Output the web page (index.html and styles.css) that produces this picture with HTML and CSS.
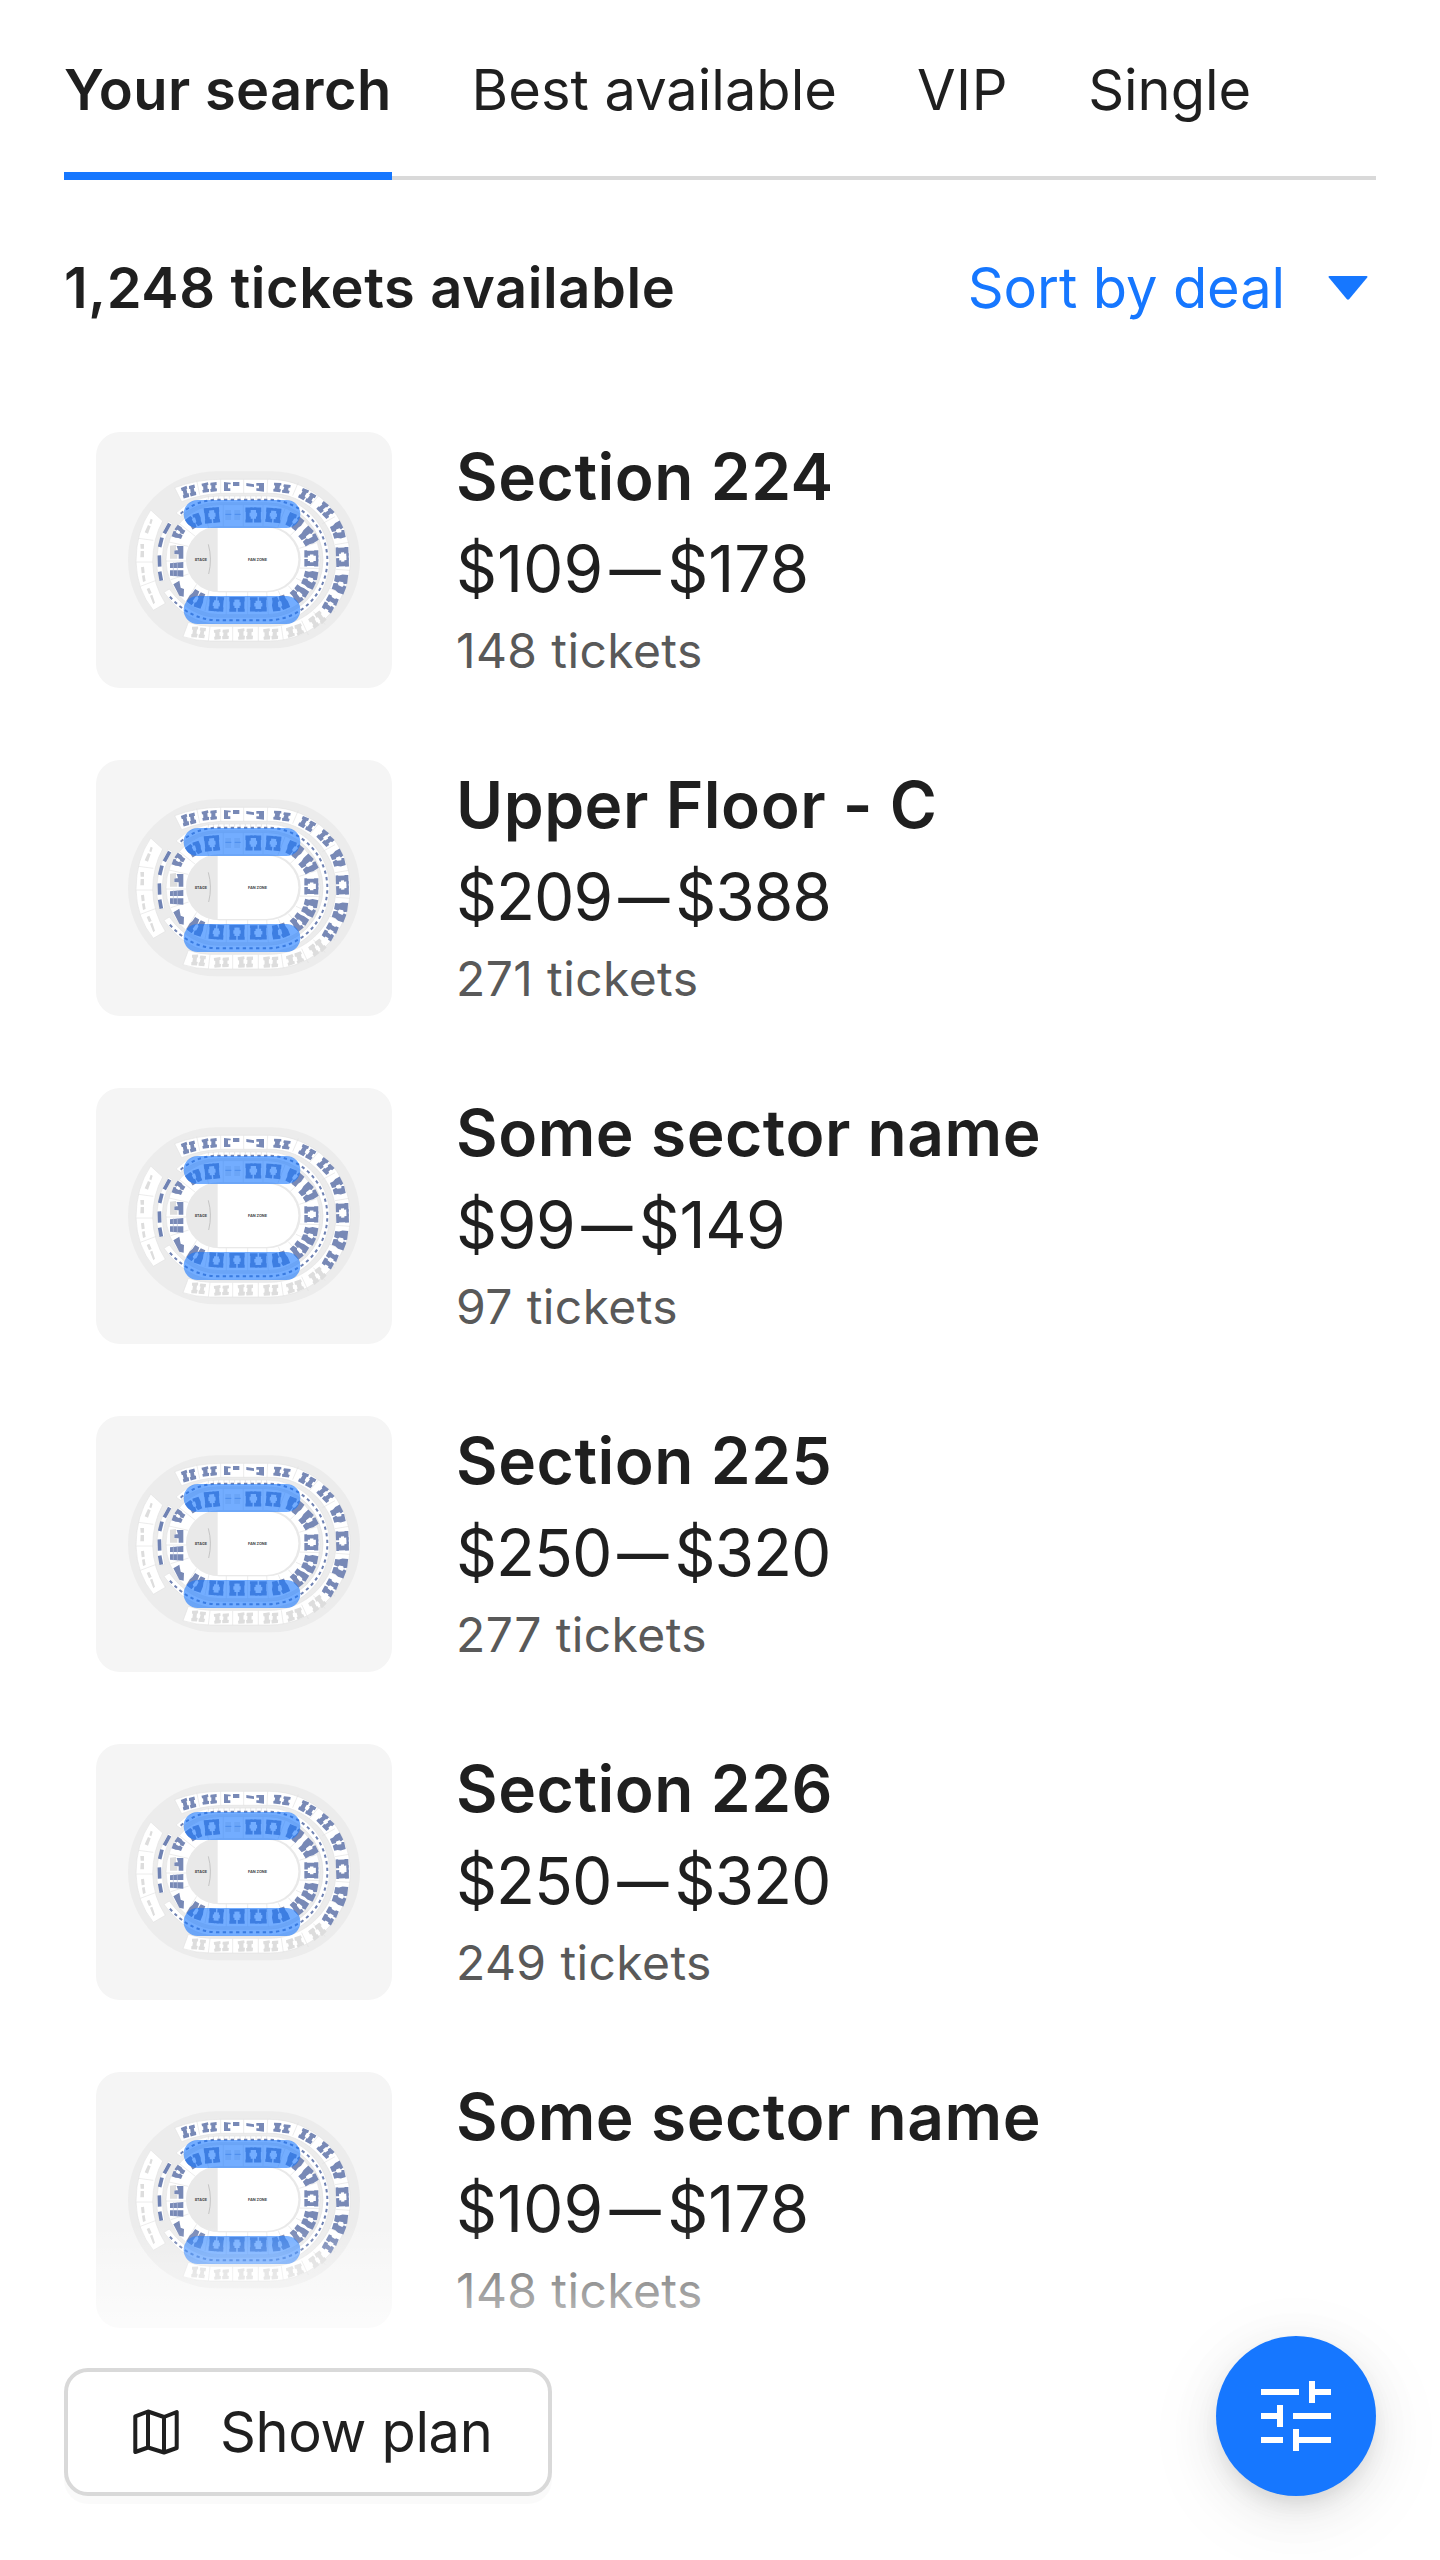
FILE: index.html
```html
<!DOCTYPE html>
<html lang="en">
<head>
<meta charset="utf-8">
<title>Tickets</title>
<link rel="stylesheet" href="styles.css">
</head>
<body>
<svg class="defs" width="0" height="0" aria-hidden="true">
  <defs>
    <g id="seats">
      <path d="M-21-20H-2V-14H-7V-6H-10V4H-7V10H-2V20H-21V12H-20V-8H-21Z"/>
      <path d="M21-20H2V-14H7V-6H10V4H7V10H2V20H21V12H20V-8H21Z"/>
      <path d="M-8-20H8V-13H-8Z"/>
    </g>
    <g id="pair">
      <path d="M-21-13L-3-16-2-8-5-7-5 4-1 5-2 15-19 16-20 8-17 6-17-4-20-5Z"/>
      <path d="M21-15L4-14 3-6 6-5 5 5 2 6 3 15 20 14 21 5 17 4 17-5 21-6Z"/>
    </g>
    <g id="wedge">
      <path d="M-23-17L-3-20 0-11-4-8-4 3 0 6-2 18-16 19-17 8-21-1Z"/>
      <path d="M23-17L4-20 2-12 7-9 5 3 1 6 3 18 17 19 18 8 22-1Z"/>
    </g>
    <symbol id="venue" viewBox="18 21 888 768">
      <rect x="114" y="139" width="696" height="531" rx="265" fill="#ececec"/>
      <g fill="#fff" stroke="#e3e3e3" stroke-width="2">
        <path d="M254 188Q320 163 392 163H539A242 242.500 0 0 1 539 648H360Q318 648 279 635L295 592Q330 604 360 604H539A199 199.500 0 0 0 539 205H392Q330 208 275 230Z"/>
        <path d="M182 255L218 288Q189 340 188 410 190 480 226 535L190 556Q140 495 138 410 138 320 182 255Z"/>
        <path d="M258 264Q310 213 385 213H532A187 192 0 0 1 532 597H385Q290 597 222 502L238 492Q300 577 385 577H532A167 172 0 0 0 532 233H385Q318 233 272 274Z"/>
        <path d="M235 288L247 296Q219 340 217 400 217 436 224 466L208 471Q198 430 201 392 207 330 235 288Z"/>
        <path d="M390 239H530A160 165 0 0 1 530 569H390A162 165 0 0 1 390 239ZM390 306A98 97 0 0 0 390 500H530A98 97 0 0 0 530 306Z" fill-rule="evenodd"/>
        <path d="M145 340L190 346M138 411H188M151 484L199 466M320 166L329 209M392 163V205M461 163V205M533 163L531 205M625 172L608 212M685 213L658 245M735 275L697 296M777 352L735 359M780 436L738 433M762 508L720 490M735 561L700 536M705 598L670 560M655 630L635 587M580 645L574 604M505 648V605M428 648V605M355 648L360 605" fill="none"/>
        <path d="M400 239V306M460 239V306M519 239V306M585 252L563 308M642 292L600 332M680 353L628 370M691 431L628 429M678 487L618 460M640 535L595 482M590 560L565 497M535 569L530 500M473 569V500M409 569V500M345 558L357 495M289 528L320 478M242 464L296 447M228 408H292M237 351L294 364M268 296L316 334M340 250L356 309" fill="none"/>
      </g>
      <path d="M355 213V224M370 213V224M386 213V224M402 213V224M418 213V224M434 213V224M450 213V224M466 213V224M482 213V224M498 213V224M514 213V224M530 213V224" stroke="#ddd" stroke-width="2"/>
      <rect x="288" y="304" width="344" height="198" rx="98" fill="#e9e9e9"/>
      <path d="M383 308H530A95 95 0 0 1 530 498H383Z" fill="#fff"/>
      <path d="M355 358Q367 402 356 447" fill="none" stroke="#c5c5c5" stroke-width="3"/>
      <text x="314" y="407" class="venue-label" textLength="37" lengthAdjust="spacingAndGlyphs">STAGE</text>
      <text x="474" y="408" class="venue-label" textLength="57" lengthAdjust="spacingAndGlyphs">FAN ZONE</text>
      <path d="M272 266Q322 224 385 224H532A180 181 0 0 1 532 586H385Q300 586 235 510" fill="none" stroke="#6f82b3" stroke-width="6" stroke-dasharray="10 10"/>
      <path d="M239 296L223 325M216 338L209 366M208 391L209 425M209 440L214 467" fill="none" stroke="#6f82b3" stroke-width="11"/>
      <g fill="#7889b6">
        <use href="#pair" transform="translate(296 199) rotate(-12) scale(1 1.120)"/>
        <use href="#pair" transform="translate(358 187) rotate(-4) scale(1.080 .95)"/>
        <path d="M402 171L422 173V178H414V190H421V198H402ZM429 171H448V183H429ZM469 174L492 178V186L469 183ZM499 174H522V200L499 197V190H507V182H499Z"/>
        <use href="#pair" transform="translate(575 189) rotate(10) scale(1.200 .9)"/>
        <use href="#pair" transform="translate(651 213) rotate(32) scale(1.100)"/>
        <use href="#pair" transform="translate(706 255) rotate(48) scale(1.100)"/>
        <use href="#wedge" transform="translate(743 317) rotate(70) scale(1.150 .95)"/>
        <use href="#seats" transform="translate(757 396) rotate(88) scale(1.400 .95)"/>
        <use href="#wedge" transform="translate(750 475) rotate(104) scale(1.300 1.050)"/>
        <use href="#pair" transform="translate(721 536) rotate(122) scale(1.150)"/>
        <use href="#wedge" transform="translate(313 289) rotate(-28)"/>
        <use href="#seats" transform="translate(366 271) rotate(-5) scale(1.080 1.150)"/>
        <use href="#seats" transform="translate(490 270) scale(1.130)"/>
        <use href="#seats" transform="translate(550 271) rotate(5) scale(1.080)"/>
        <use href="#wedge" transform="translate(612 290) rotate(32) scale(1.100)"/>
        <use href="#wedge" transform="translate(654 335) rotate(54) scale(1.150 1.200)"/>
        <use href="#seats" transform="translate(664 400) rotate(90) scale(1.150 1.050)"/>
        <use href="#wedge" transform="translate(659 462) rotate(108) scale(1.200 1.080)"/>
        <use href="#wedge" transform="translate(627 505) rotate(132) scale(1.050 1.150)"/>
        <use href="#wedge" transform="translate(570 534) rotate(165) scale(1.150)"/>
        <use href="#seats" transform="translate(505 538) rotate(180) scale(1.200 1.080)"/>
        <use href="#seats" transform="translate(441 538) scale(1.100)"/>
        <use href="#seats" transform="translate(379 537) rotate(184) scale(1.050 1.080)"/>
        <use href="#wedge" transform="translate(320 521) rotate(208) scale(1.050 1.250)"/>
        <use href="#wedge" transform="translate(266 323) rotate(-62) scale(.85 .8)"/>
        <path d="M260 363H280V401H266V388H253V376H264ZM240 415L280 411V429H240ZM240 436H280V455L240 452ZM250 478L268 467 272 488 282 492 281 515 268 512Z"/>
        <path d="M262 411V455M250 412V454" stroke="#b3bedb" stroke-width="2"/>
      </g>
      <g fill="#ddd">
        <path d="M240 362L258 360V376H252V388H262V401H240ZM151 357H162V371H152ZM152 378H162V397H151ZM153 427L162 425 164 443 155 445ZM156 452L164 450 167 468 159 471ZM170 492L178 488 185 504 177 508ZM180 512L187 509 195 533 190 538ZM182 281L188 284 184 298 178 295ZM174 300L182 304 174 326 164 322Z"/>
        <path d="M406 255H423V285H406ZM433 255H450V285H433Z" opacity=".6"/>
        <use href="#pair" transform="translate(682 584) rotate(145) scale(1.100 1.200)"/>
        <use href="#pair" transform="translate(615 617) rotate(164) scale(1.200 1.050)"/>
        <use href="#pair" transform="translate(542 627) scale(1.080)"/>
        <use href="#pair" transform="translate(466 627) scale(1.100)"/>
        <use href="#pair" transform="translate(394 628) scale(1.080 1)"/>
        <use href="#pair" transform="translate(325 622) rotate(8) scale(1 1.080)"/>
      </g>
      <path d="M406 268H424M434 268H452" stroke="#9aabd0" stroke-width="3"/>
      <path d="M323 225H589A42 42 0 0 1 589 309H323A42 42 0 0 1 323 225ZM323 513H589A42 42 0 0 1 589 597H323A42 42 0 0 1 323 513Z" fill="#1677ff" fill-opacity=".6"/>
    </symbol>
  </defs>
</svg>

<main class="screen">
  <nav class="tabs">
    <a class="tab tab-active">Your search</a>
    <a class="tab">Best available</a>
    <a class="tab tab-short">VIP</a>
    <a class="tab">Single</a>
  </nav>

  <header class="summary">
    <h1 class="count">1,248 tickets available</h1>
    <button class="sort">Sort by deal
      <svg class="caret" viewBox="0 0 40 24"><path d="M1.500 0H38.500Q40 0 39.200 1.500L21.300 23Q20 24.500 18.700 23L.8 1.500Q0 0 1.500 0Z" fill="currentColor"/></svg>
    </button>
  </header>

  <ul class="list">
    <li class="item">
      <svg class="thumb"><use href="#venue"/></svg>
      <div class="info"><h2 class="name">Section 224</h2><p class="price">$109<span class="dash">—</span>$178</p><p class="left">148 tickets</p></div>
    </li>
    <li class="item">
      <svg class="thumb"><use href="#venue"/></svg>
      <div class="info"><h2 class="name">Upper Floor - C</h2><p class="price price-tight">$209<span class="dash">—</span>$388</p><p class="left">271 tickets</p></div>
    </li>
    <li class="item">
      <svg class="thumb"><use href="#venue"/></svg>
      <div class="info"><h2 class="name">Some sector name</h2><p class="price price-snug">$99<span class="dash">—</span>$149</p><p class="left">97 tickets</p></div>
    </li>
    <li class="item">
      <svg class="thumb"><use href="#venue"/></svg>
      <div class="info"><h2 class="name">Section 225</h2><p class="price price-tight">$250<span class="dash">—</span>$320</p><p class="left">277 tickets</p></div>
    </li>
    <li class="item">
      <svg class="thumb"><use href="#venue"/></svg>
      <div class="info"><h2 class="name">Section 226</h2><p class="price price-tight">$250<span class="dash">—</span>$320</p><p class="left">249 tickets</p></div>
    </li>
    <li class="item">
      <svg class="thumb"><use href="#venue"/></svg>
      <div class="info"><h2 class="name">Some sector name</h2><p class="price">$109<span class="dash">—</span>$178</p><p class="left">148 tickets</p></div>
    </li>
  </ul>

  <footer class="actions">
    <button class="plan">
      <svg class="plan-icon" viewBox="0 0 48 48"><path d="M3.300 8.300L16 3.500 32 9 44.700 4V40L32 44.500 16 39.500 3.300 44Z M16 3.500V39.500M32 9V44.500" fill="none" stroke="currentColor" stroke-width="4" stroke-linejoin="round"/></svg>
      Show plan
    </button>
    <button class="filter" aria-label="Filters">
      <svg class="filter-icon" viewBox="0 0 160 160"><path d="M45 53H83V59H45ZM93 45H99V53H115V59H99V67H93ZM45 77H61V69H67V91H61V83H45ZM77 77H115V83H77ZM45 101H67V107H45ZM77 93H83V101H115V107H83V115H77Z" fill="#fff"/></svg>
    </button>
  </footer>
</main>
</body>
</html>
```
FILE: styles.css
```css
* {
  box-sizing: border-box;
}

body,
h1,
h2,
p,
ul {
  margin: 0;
  padding: 0;
}

body {
  background: #fff;
  color: #1f1f1f;
  font-family: Inter, "Liberation Sans", sans-serif;
  font-size: 56px;
  line-height: 88px;
}

button {
  border: 0;
  background: none;
  color: inherit;
  font: inherit;
}

.defs {
  position: absolute;
}

.screen {
  position: relative;
  display: flex;
  flex-direction: column;
  height: 2560px;
  padding: 0 64px;
  overflow: hidden;
}

.tabs {
  display: flex;
  flex: none;
  gap: 80px;
  height: 180px;
  padding-top: 46px;
  box-shadow: inset 0 -4px #d9d9d9;
}

.tab-active {
  font-weight: 600;
  letter-spacing: .36px;
  box-shadow: inset 0 -8px #1677ff;
}

.tab-short {
  letter-spacing: .6px;
}

.summary {
  display: flex;
  flex: none;
  justify-content: space-between;
  align-items: center;
  height: 88px;
  margin-top: 64px;
}

.count {
  font-size: 56px;
  font-weight: 600;
  letter-spacing: .6px;
}

.sort {
  display: flex;
  align-items: center;
  gap: 43px;
  padding: 0 8px 0 0;
  color: #1677ff;
  letter-spacing: -.1px;
}

.caret {
  width: 40px;
  height: 24px;
}

.list {
  display: flex;
  flex-direction: column;
  flex: none;
  gap: 72px;
  margin-top: 100px;
  padding-left: 32px;
  list-style: none;
}

.item {
  display: flex;
  gap: 64px;
  height: 256px;
}

.thumb {
  flex: none;
  width: 296px;
  height: 256px;
  border-radius: 24px;
  background: #f5f5f5;
}

.venue-label {
  font-size: 12px;
  font-weight: 700;
  fill: #444;
}

.info {
  margin-top: -1.5px;
}

.name,
.price {
  font-size: 64px;
  line-height: 92px;
}

.name {
  font-weight: 600;
  letter-spacing: .55px;
}

.price {
  font-weight: 400;
}

.price-snug {
  letter-spacing: -.4px;
}

.price-tight {
  letter-spacing: -1px;
}

.dash {
  display: inline-block;
  transform: scaleX(.8);
}

.left {
  color: #595959;
  font-size: 48px;
  line-height: 72px;
  letter-spacing: .4px;
}

.actions {
  position: absolute;
  right: 0;
  bottom: 0;
  left: 0;
  display: flex;
  justify-content: space-between;
  align-items: flex-start;
  height: 336px;
  padding: 112px 64px 0;
  background: linear-gradient(rgba(255, 255, 255, 0), #fff 160px);
}

.plan {
  display: flex;
  align-items: center;
  gap: 40px;
  width: 488px;
  height: 128px;
  margin-top: 32px;
  padding: 0 0 0 64px;
  border: 4px solid #d9d9d9;
  border-radius: 24px;
  background: #fff;
  box-shadow: 0 8px 0 rgba(0, 0, 0, .02);
  letter-spacing: -.35px;
}

.plan-icon {
  width: 48px;
  height: 48px;
}

.filter {
  width: 160px;
  height: 160px;
  padding: 0;
  border-radius: 50%;
  background: #1677ff;
  box-shadow: 0 12px 24px -8px rgba(0, 0, 0, .12), 0 12px 48px rgba(0, 0, 0, .08), 0 18px 72px 16px rgba(0, 0, 0, .04);
}

.filter-icon {
  display: block;
  width: 160px;
  height: 160px;
}
```
